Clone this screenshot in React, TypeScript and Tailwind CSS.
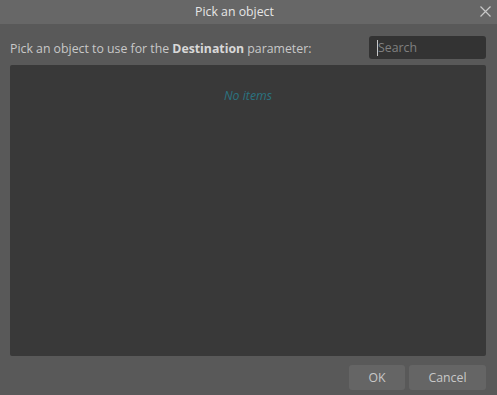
export default function App() {
    return (
        <div
            className="flex h-[395px] w-[497px] flex-col bg-[#595959] text-[12.3px] text-[#c8c8c8]"
            style={{ fontFamily: '"Open Sans", "Noto Sans", sans-serif' }}
        >
            {/* Title bar */}
            <div className="relative flex h-[24px] shrink-0 items-center justify-center bg-[#676767] pr-[28px] text-[#e6e6e6]">
                <span className="text-[12.3px]">Pick an object</span>
                <svg
                    className="absolute right-[6px] top-[6px]"
                    width="11"
                    height="11"
                    viewBox="0 0 11 11"
                    stroke="#c8c8c8"
                    strokeWidth="1.2"
                >
                    <path d="M0.5 0.5 L10.5 10.5 M10.5 0.5 L0.5 10.5" />
                </svg>
            </div>

            {/* Body */}
            <div className="flex flex-1 flex-col pb-[5px] pl-[10px] pr-[11px] pt-[12px]">
                <div className="flex items-center justify-between">
                    <span className="pt-[3px]">
                        Pick an object to use for the <b className="font-bold text-[#d8d8d8]">Destination</b> parameter:
                    </span>
                    <div className="flex h-[23px] w-[117px] items-center rounded-[3px] bg-[#333333] pl-[8px] text-[#808080]">
                        <span className="h-[16px] w-px bg-[#c8c8c8]" />
                        <span className="pt-[2px]">Search</span>
                    </div>
                </div>

                <div className="mt-[6px] flex flex-1 justify-center rounded-[2px] bg-[#393939] pt-[22px]">
                    <span className="italic text-[#2b7380]">No items</span>
                </div>

                <div className="mt-[9px] flex justify-end gap-[4px]">
                    <button className="h-[25px] w-[56px] rounded-[3px] bg-[#656565] pt-[2px] text-[#c8c8c8]">OK</button>
                    <button className="h-[25px] w-[77px] rounded-[3px] bg-[#656565] pt-[2px] text-[#c8c8c8]">Cancel</button>
                </div>
            </div>
        </div>
    )
}
